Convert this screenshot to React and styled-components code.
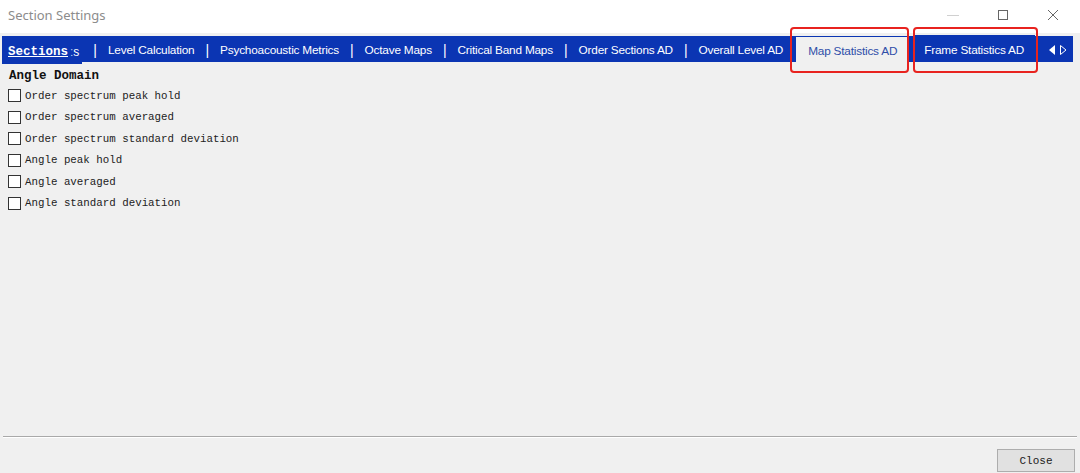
import React from "react";
import styled, { createGlobalStyle } from "styled-components";

const GlobalStyle = createGlobalStyle`
  html, body {
    margin: 0;
    padding: 0;
    height: 100%;
    background: #f0f0f0;
  }
  #root {
    height: 100%;
  }
`;

const Window = styled.div`
  width: 1080px;
  height: 473px;
  display: flex;
  flex-direction: column;
  background: #f0f0f0;
  position: relative;
  overflow: hidden;
`;

const TitleBar = styled.div`
  height: 33px;
  flex-shrink: 0;
  background: #ffffff;
  display: flex;
  align-items: center;
  padding-left: 8px;
  padding-right: 2px;
`;

const Title = styled.div`
  flex: 1;
  font-family: "Noto Sans", "Liberation Sans", sans-serif;
  font-size: 13px;
  color: #8c8c8c;
  margin-top: -3px;
`;

const WinButtons = styled.div`
  display: flex;
  align-items: center;
  height: 100%;
  margin-top: -3px;
`;

const WinButton = styled.div`
  width: 50px;
  height: 100%;
  display: flex;
  align-items: center;
  justify-content: center;
`;

const TabStrip = styled.div`
  margin: 3px 7px 0 2px;
  height: 26px;
  background: #0b35b3;
  display: flex;
  align-items: stretch;
  position: relative;
`;

const FirstTab = styled.div`
  display: flex;
  align-items: center;
  padding: 3px 0 0 6px;
  height: 25px;
  background: #0b35b3;
`;

const SectionsLabel = styled.span`
  font-family: "Liberation Mono", monospace;
  font-weight: bold;
  font-size: 12.5px;
  color: #ffffff;
  text-decoration: underline;
`;

const Clipped = styled.span`
  font-family: "Liberation Sans", sans-serif;
  font-size: 12px;
  color: #ffffff;
  margin-left: 2px;
  margin-right: 3px;
`;

const Tab = styled.div`
  display: flex;
  align-items: center;
  padding: 2px ${(p) => p.$pad ?? 0}px 0;
  font-family: "Liberation Sans", sans-serif;
  font-size: 11.8px;
  letter-spacing: -0.2px;
  color: ${(p) => (p.$active ? "#2e4ea8" : "#ffffff")};
  background: ${(p) => (p.$active ? "#f0f0f0" : "transparent")};
  white-space: nowrap;
`;

const ActiveTab = styled(Tab)`
  margin: 1px 0 -1px 13px;
`;

const FrameTab = styled(Tab)`
  margin: -1px 0 0 4px;
  background: #0b35b3;
`;

const Divider = styled.div`
  display: flex;
  align-items: center;
  padding: 2px 11px 0;
  color: #ffffff;
  font-family: "Liberation Sans", sans-serif;
  font-size: 14px;
`;

const Arrows = styled.div`
  display: flex;
  align-items: center;
  margin-left: auto;
  padding: 2px 5px 0 0;
`;

const Content = styled.div`
  flex: 1;
  padding: 7px 8px 0;
  display: flex;
  flex-direction: column;
`;

const GroupTitle = styled.div`
  font-family: "Liberation Mono", monospace;
  font-weight: bold;
  font-size: 12.5px;
  color: #111111;
  margin-left: 1px;
  margin-bottom: 2px;
`;

const CheckRow = styled.label`
  display: flex;
  align-items: center;
  height: 21.5px;
  gap: 4px;
`;

const Box = styled.span`
  width: 11px;
  height: 11px;
  border: 1px solid #333333;
  background: #ffffff;
  box-sizing: content-box;
  flex-shrink: 0;
`;

const CheckText = styled.span`
  font-family: "Liberation Mono", monospace;
  font-size: 10.8px;
  color: #222222;
`;

const Separator = styled.div`
  margin: 0 3px;
  height: 1px;
  background: #a9a9a9;
  border-bottom: 1px solid #ffffff;
`;

const Footer = styled.div`
  height: 35px;
  display: flex;
  align-items: center;
  justify-content: flex-end;
  padding-right: 5px;
`;

const CloseButton = styled.button`
  width: 78px;
  height: 23px;
  margin-top: 10px;
  background: #e1e1e1;
  border: 1px solid #adadad;
  font-family: "Liberation Mono", monospace;
  font-size: 11px;
  color: #222222;
  padding: 0;
`;

const Mark = styled.div`
  position: absolute;
  top: 27px;
  height: 46px;
  border: 2.5px solid #e8231f;
  border-radius: 4px;
  box-sizing: border-box;
  left: ${(p) => p.$left}px;
  width: ${(p) => p.$width}px;
`;

const tabs = [
  "Level Calculation",
  "Psychoacoustic Metrics",
  "Octave Maps",
  "Critical Band Maps",
  "Order Sections AD",
  "Overall Level AD",
];

export default function App() {
  const options = [
    "Order spectrum peak hold",
    "Order spectrum averaged",
    "Order spectrum standard deviation",
    "Angle peak hold",
    "Angle averaged",
    "Angle standard deviation",
  ];

  return (
    <>
      <GlobalStyle />
      <Window>
        <TitleBar>
          <Title>Section Settings</Title>
          <WinButtons>
            <WinButton>
              <svg width="12" height="12" viewBox="0 0 12 12">
                <line x1="0" y1="6.5" x2="12" y2="6.5" stroke="#d0d0d0" strokeWidth="1" />
              </svg>
            </WinButton>
            <WinButton>
              <svg width="12" height="12" viewBox="0 0 12 12">
                <rect x="1.5" y="1.5" width="9" height="9" fill="none" stroke="#666" strokeWidth="1" />
              </svg>
            </WinButton>
            <WinButton>
              <svg width="12" height="12" viewBox="0 0 12 12">
                <path d="M1 1 L11 11 M11 1 L1 11" stroke="#666" strokeWidth="1" />
              </svg>
            </WinButton>
          </WinButtons>
        </TitleBar>

        <TabStrip>
          <FirstTab>
            <SectionsLabel>Sections</SectionsLabel>
            <Clipped>ːs</Clipped>
          </FirstTab>
          {tabs.map((t) => (
            <React.Fragment key={t}>
              <Divider>|</Divider>
              <Tab>{t}</Tab>
            </React.Fragment>
          ))}
          <ActiveTab $active $pad={12}>Map Statistics AD</ActiveTab>
          <FrameTab $pad={11}>Frame Statistics AD</FrameTab>
          <Arrows>
            <svg width="20" height="12" viewBox="0 0 20 12">
              <path d="M7 1 L1 6 L7 11 Z" fill="#ffffff" />
              <path d="M12.5 1.5 L18 6 L12.5 10.5 Z" fill="none" stroke="#ffffff" strokeWidth="1" />
            </svg>
          </Arrows>
        </TabStrip>

        <Content>
          <GroupTitle>Angle Domain</GroupTitle>
          {options.map((o) => (
            <CheckRow key={o}>
              <Box />
              <CheckText>{o}</CheckText>
            </CheckRow>
          ))}
        </Content>

        <Separator />
        <Footer>
          <CloseButton>Close</CloseButton>
        </Footer>

        <Mark $left={790} $width={119} />
        <Mark $left={913} $width={125} />
      </Window>
    </>
  );
}
